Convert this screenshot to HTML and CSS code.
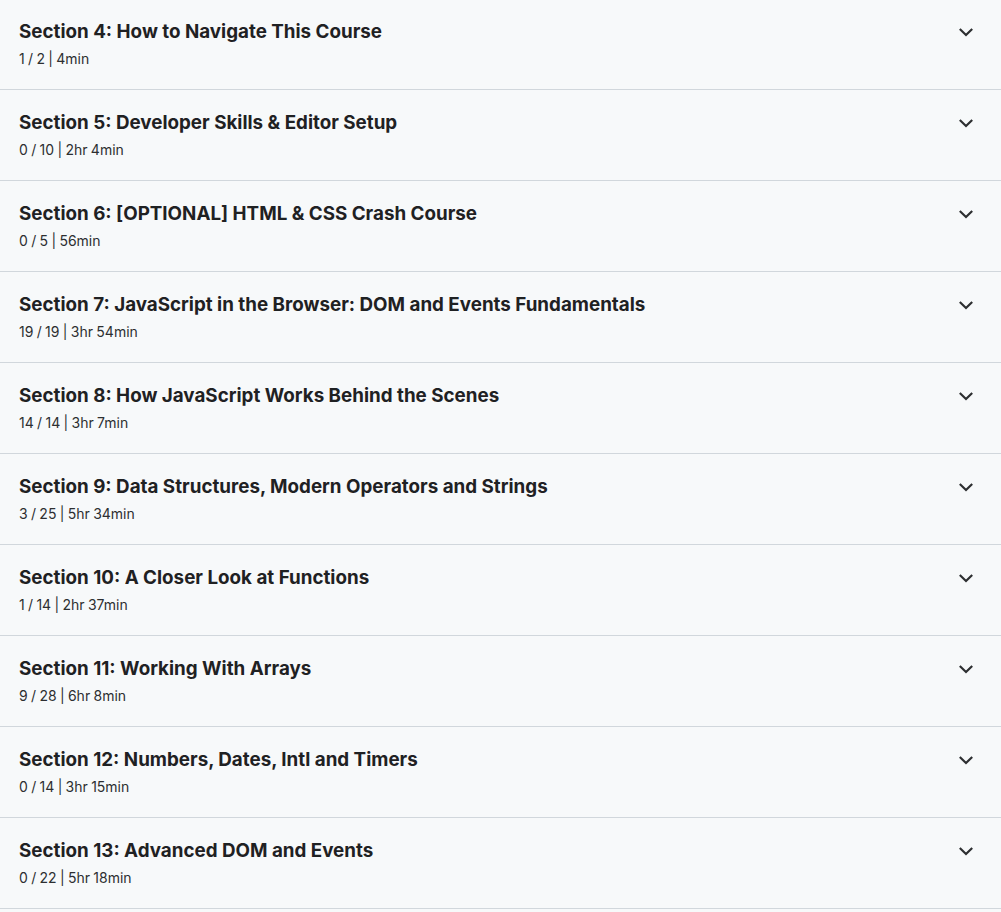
FILE: index.html
```html
<!DOCTYPE html>
<html lang="en">
<head>
<meta charset="utf-8">
<title>Course content</title>
<link rel="stylesheet" href="styles.css">
</head>
<body>
<div class="sections">
  <div class="section">
    <div class="head"><span class="title">Section 4: How to Navigate This Course</span><svg class="chev" viewBox="0 0 16 16"><path d="M1.8 5 L8 11 L14.2 5"/></svg></div>
    <div class="meta">1 / 2 | 4min</div>
  </div>
  <div class="section">
    <div class="head"><span class="title">Section 5: Developer Skills &amp; Editor Setup</span><svg class="chev" viewBox="0 0 16 16"><path d="M1.8 5 L8 11 L14.2 5"/></svg></div>
    <div class="meta">0 / 10 | 2hr 4min</div>
  </div>
  <div class="section">
    <div class="head"><span class="title">Section 6: [OPTIONAL] HTML &amp; CSS Crash Course</span><svg class="chev" viewBox="0 0 16 16"><path d="M1.8 5 L8 11 L14.2 5"/></svg></div>
    <div class="meta">0 / 5 | 56min</div>
  </div>
  <div class="section">
    <div class="head"><span class="title">Section 7: JavaScript in the Browser: DOM and Events Fundamentals</span><svg class="chev" viewBox="0 0 16 16"><path d="M1.8 5 L8 11 L14.2 5"/></svg></div>
    <div class="meta">19 / 19 | 3hr 54min</div>
  </div>
  <div class="section">
    <div class="head"><span class="title">Section 8: How JavaScript Works Behind the Scenes</span><svg class="chev" viewBox="0 0 16 16"><path d="M1.8 5 L8 11 L14.2 5"/></svg></div>
    <div class="meta">14 / 14 | 3hr 7min</div>
  </div>
  <div class="section">
    <div class="head"><span class="title">Section 9: Data Structures, Modern Operators and Strings</span><svg class="chev" viewBox="0 0 16 16"><path d="M1.8 5 L8 11 L14.2 5"/></svg></div>
    <div class="meta">3 / 25 | 5hr 34min</div>
  </div>
  <div class="section">
    <div class="head"><span class="title">Section 10: A Closer Look at Functions</span><svg class="chev" viewBox="0 0 16 16"><path d="M1.8 5 L8 11 L14.2 5"/></svg></div>
    <div class="meta">1 / 14 | 2hr 37min</div>
  </div>
  <div class="section">
    <div class="head"><span class="title">Section 11: Working With Arrays</span><svg class="chev" viewBox="0 0 16 16"><path d="M1.8 5 L8 11 L14.2 5"/></svg></div>
    <div class="meta">9 / 28 | 6hr 8min</div>
  </div>
  <div class="section">
    <div class="head"><span class="title">Section 12: Numbers, Dates, Intl and Timers</span><svg class="chev" viewBox="0 0 16 16"><path d="M1.8 5 L8 11 L14.2 5"/></svg></div>
    <div class="meta">0 / 14 | 3hr 15min</div>
  </div>
  <div class="section">
    <div class="head"><span class="title">Section 13: Advanced DOM and Events</span><svg class="chev" viewBox="0 0 16 16"><path d="M1.8 5 L8 11 L14.2 5"/></svg></div>
    <div class="meta">0 / 22 | 5hr 18min</div>
  </div>
</div>
</body>
</html>
```
FILE: styles.css
```css
html, body {
  margin: 0;
  padding: 0;
  background: #f7f9fa;
}
body {
  font-family: Inter, "Noto Sans", sans-serif;
  color: #2d2f31;
  overflow: hidden;
}
.sections {
  margin-top: -1px;
}
.section {
  padding: 22px 27px 20px 19px;
  border-bottom: 1px solid #d1d7dc;
  display: flex;
  flex-direction: column;
  gap: 6px;
}
.head {
  display: flex;
  align-items: center;
  justify-content: space-between;
  height: 22px;
}
.title {
  font-size: 18.8px;
  line-height: 22px;
  font-weight: 700;
  color: #1f2123;
}
.meta {
  font-size: 14px;
  line-height: 20px;
  font-weight: 400;
  word-spacing: -0.6px;
}
.chev {
  width: 16px;
  height: 16px;
  flex: none;
}
.chev path {
  fill: none;
  stroke: #2d2f31;
  stroke-width: 2.2;
}
```
